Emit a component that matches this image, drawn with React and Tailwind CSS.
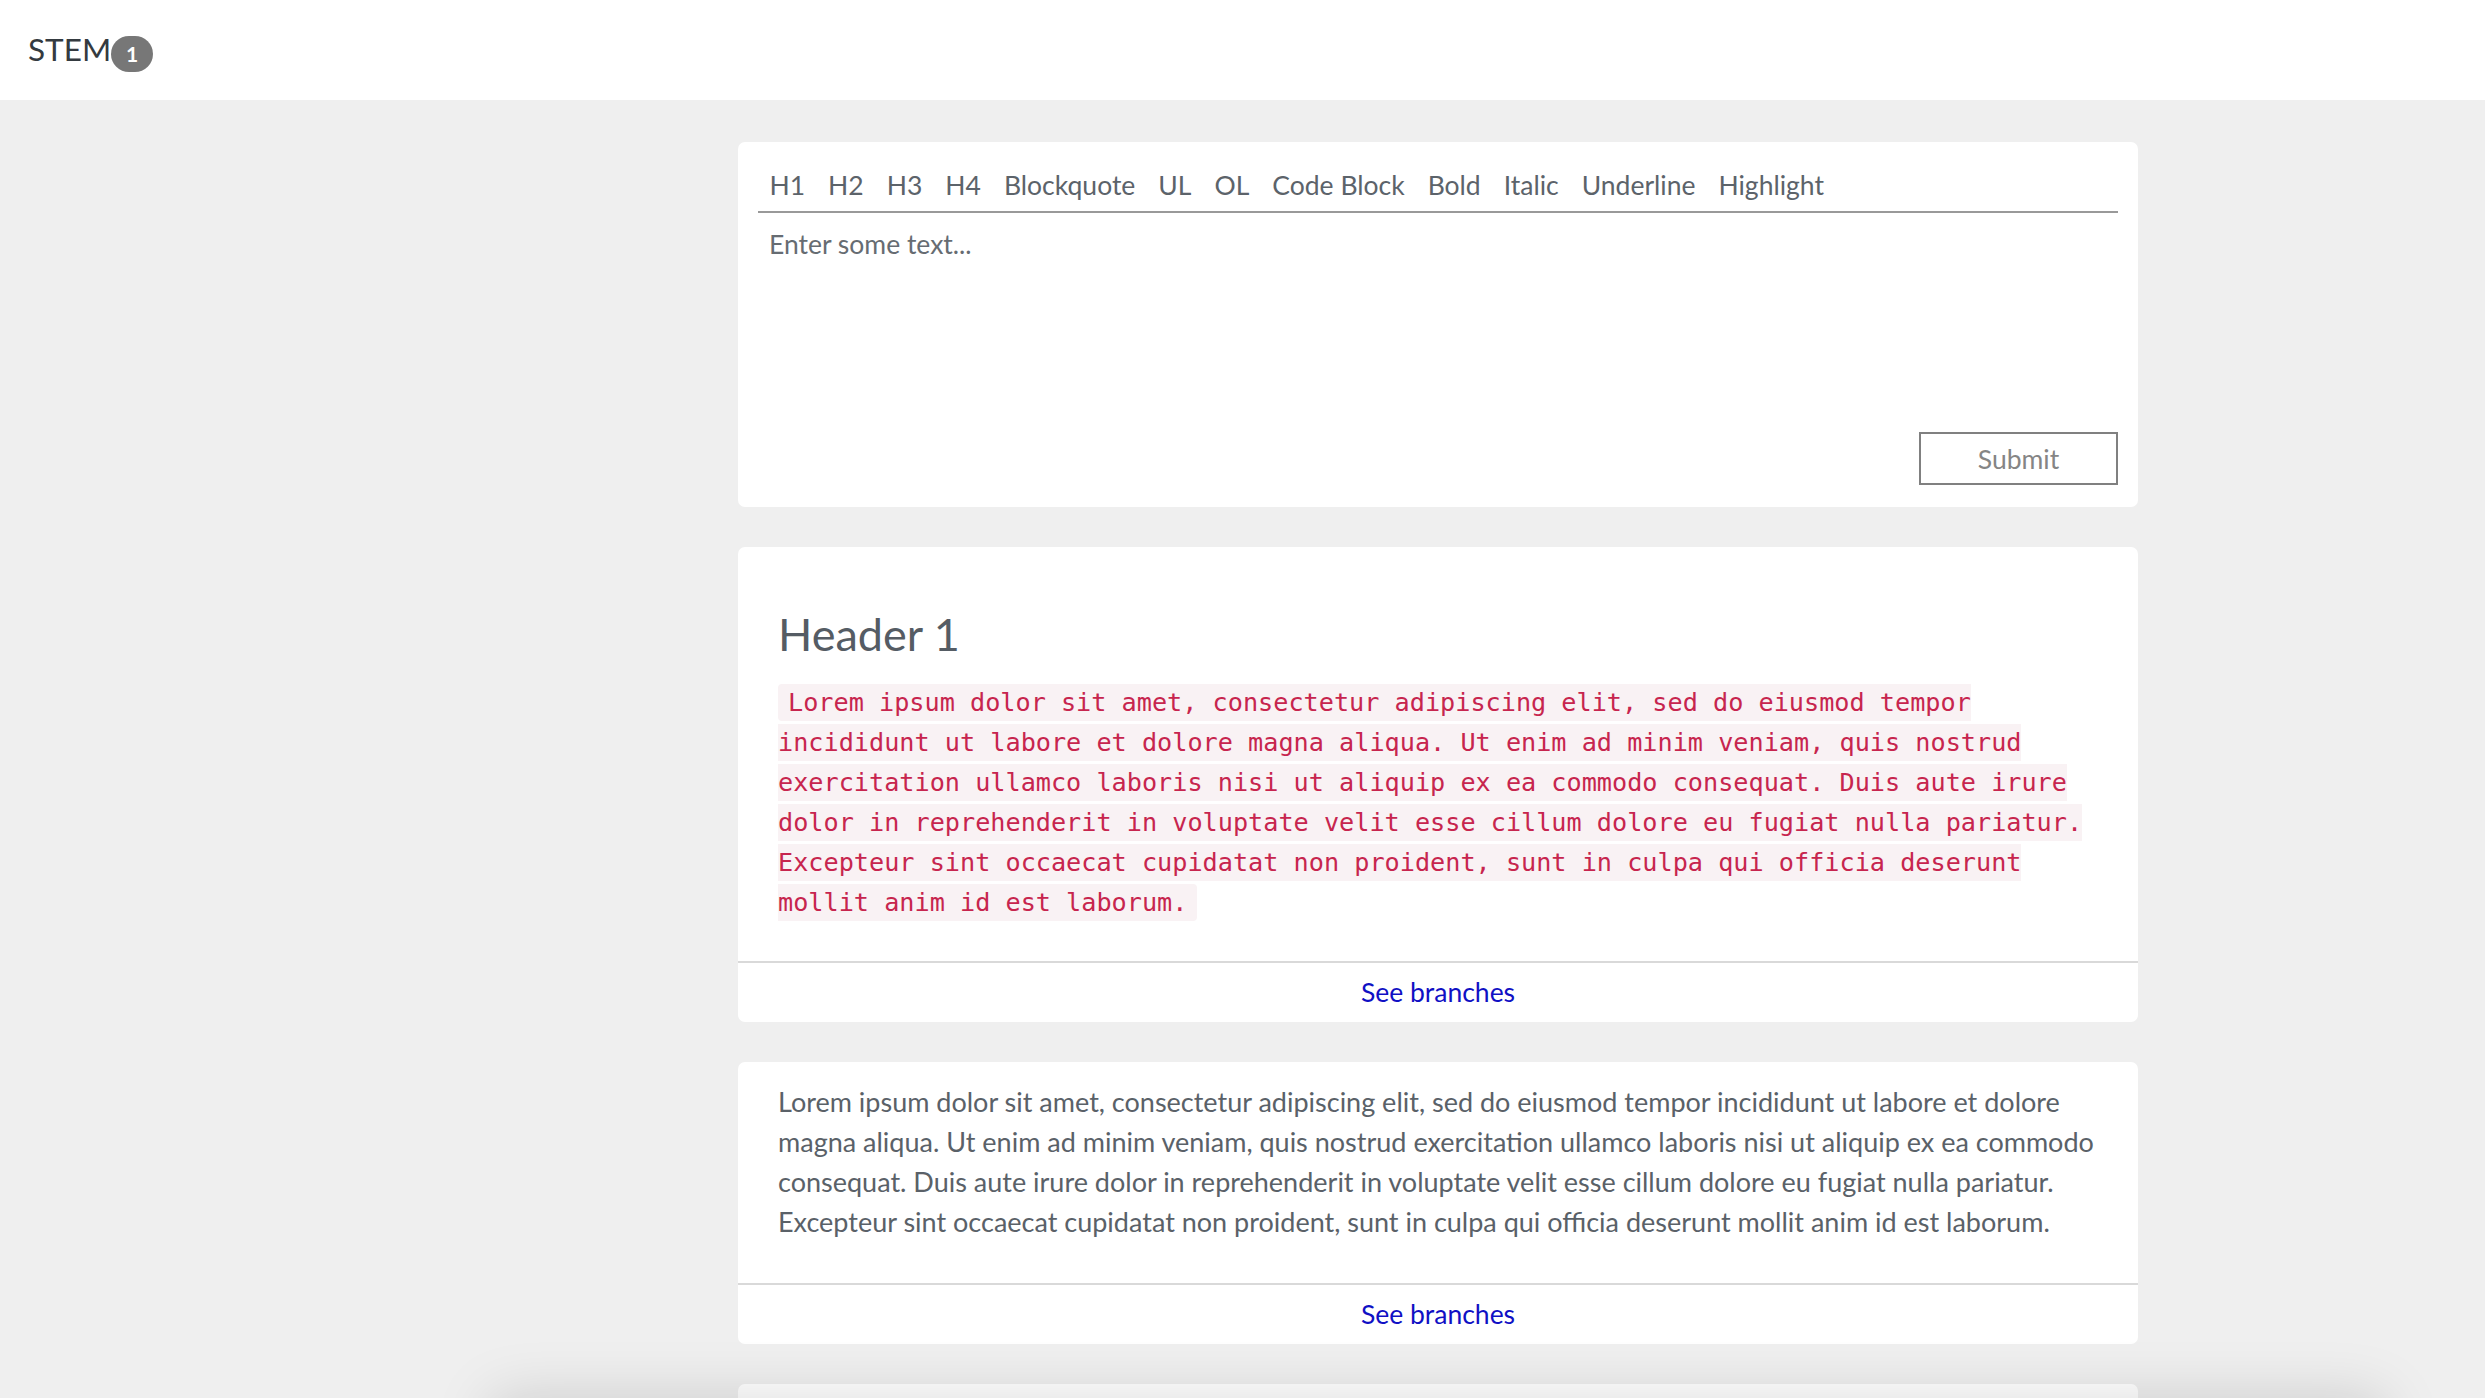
import React from "react";

const LOREM =
  "Lorem ipsum dolor sit amet, consectetur adipiscing elit, sed do eiusmod tempor incididunt ut labore et dolore magna aliqua. Ut enim ad minim veniam, quis nostrud exercitation ullamco laboris nisi ut aliquip ex ea commodo consequat. Duis aute irure dolor in reprehenderit in voluptate velit esse cillum dolore eu fugiat nulla pariatur. Excepteur sint occaecat cupidatat non proident, sunt in culpa qui officia deserunt mollit anim id est laborum.";

const TOOLS = ["H1", "H2", "H3", "H4", "Blockquote", "UL", "OL", "Code Block", "Bold", "Italic", "Underline", "Highlight"];

function Footer() {
  return (
    <div className="h-[61px] border-t-2 border-[#d9d9d9] flex items-center justify-center">
      <a className="text-[26.5px] text-[#1010c4] leading-none cursor-pointer">See branches</a>
    </div>
  );
}

export default function App() {
  return (
    <div className="min-h-screen bg-[#efefef] font-['Lato',sans-serif] text-[#5a6168]">
      <header className="h-[100px] bg-white flex items-center pl-[28px]">
        <span className="text-[31.5px] leading-none text-[#343a40]">STEM</span>
        <span className="relative top-[4px] w-[42px] h-[36px] rounded-full bg-[#777777] text-white font-bold text-[21px] flex items-center justify-center">
          1
        </span>
      </header>

      <main className="pl-[738px] pt-[42px] pb-[200px]">
        <div className="w-[1400px] flex flex-col gap-[40px]">
          {/* Editor */}
          <section className="bg-white rounded-[7px] px-[20px] pt-[17px] pb-[22px]">
            <div className="h-[54px] flex items-center border-b-2 border-[#999999]">
              {TOOLS.map((t) => (
                <button key={t} className="px-[11.5px] text-[26.5px] leading-none text-[#5c636a]">
                  {t}
                </button>
              ))}
            </div>
            <div className="h-[205px] px-[11px] pt-[11px] text-[26.5px] leading-[40px] text-[#666c72]">
              Enter some text...
            </div>
            <div className="mt-[14px] flex justify-end">
              <button className="w-[199px] h-[53px] pt-[3px] border-2 border-[#808080] text-[26.5px] text-[#858585]">
                Submit
              </button>
            </div>
          </section>

          {/* Card with header + code */}
          <section className="bg-white rounded-[7px] overflow-hidden">
            <div className="px-[40px] pt-[40px] pb-[38px]">
              <h1 className="mt-[20px] text-[45px] leading-[1.2] text-[#555c64]">Header 1</h1>
              <p className="mt-[22px] leading-[40px] text-[25.2px] font-['DejaVu_Sans_Mono',monospace]">
                <code className="font-['DejaVu_Sans_Mono',monospace] text-[25.2px] text-[#c7254e] bg-[#f9f2f4] rounded-[4px] py-[4px] px-[10px]">
                  {LOREM}
                </code>
              </p>
            </div>
            <Footer />
          </section>

          {/* Plain paragraph card */}
          <section className="bg-white rounded-[7px] overflow-hidden">
            <div className="px-[40px] pt-[20px] pb-[41px]">
              <p className="text-[27px] leading-[40px]">{LOREM}</p>
            </div>
            <Footer />
          </section>

          <section className="bg-white rounded-[7px] overflow-hidden">
            <div className="px-[40px] pt-[20px] pb-[41px]">
              <p className="text-[27px] leading-[40px]">{LOREM}</p>
            </div>
            <Footer />
          </section>
        </div>
      </main>

      <div className="fixed left-[492px] w-[1892px] bottom-[-100px] h-[100px] bg-[#efefef] shadow-[0_0_60px_rgba(0,0,0,0.15)]" />
    </div>
  );
}
